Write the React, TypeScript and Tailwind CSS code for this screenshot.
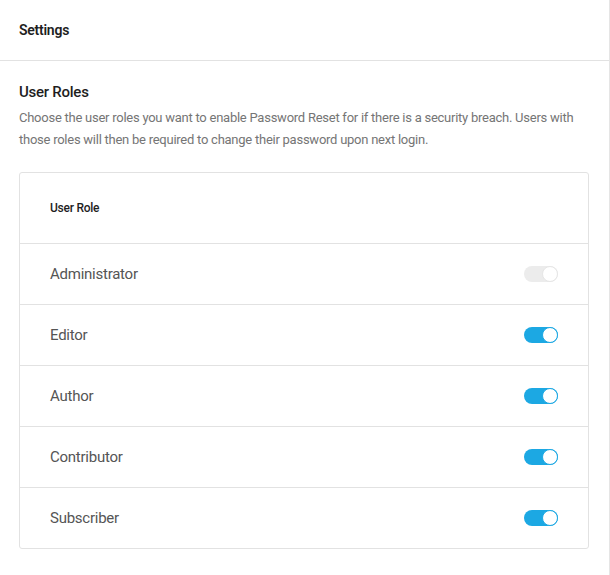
import React from "react";

const roles = [
  { name: "Administrator", on: true, disabled: true },
  { name: "Editor", on: true, disabled: false },
  { name: "Author", on: true, disabled: false },
  { name: "Contributor", on: true, disabled: false },
  { name: "Subscriber", on: true, disabled: false },
];

function Toggle({ disabled }: { disabled: boolean }) {
  return (
    <div
      className={
        "relative w-[34px] h-[16px] rounded-full " +
        (disabled ? "bg-[#ececec]" : "bg-[#1ca8e3]")
      }
    >
      <div
        className={
          "absolute right-0 top-0 w-[16px] h-[16px] rounded-full bg-white border " +
          (disabled ? "border-[#e6e6e6]" : "border-[#1ca8e3]")
        }
      />
    </div>
  );
}

export default function App() {
  return (
    <div
      className="w-[610px] h-[575px] bg-white border-r border-[#e5e5e5] tracking-[-0.25px]"
      style={{ fontFamily: "Roboto, 'Liberation Sans', sans-serif" }}
    >
      <div className="h-[61px] border-b border-[#e2e2e2] flex items-center px-[19px]">
        <span className="text-[14px] font-semibold text-[#1e1e1e]">Settings</span>
      </div>
      <div className="px-[19px] pt-[20px]">
        <h2 className="text-[15px] font-medium text-[#1e1e1e] leading-[22px]">User Roles</h2>
        <p className="mt-[4px] text-[13px] leading-[22px] text-[#757575]">
          Choose the user roles you want to enable Password Reset for if there is a security breach. Users with those roles will then be required to change their password upon next login.
        </p>
        <div className="mt-[21px] w-[570px] border border-[#e2e2e2] rounded-[3px]">
          <div className="h-[71px] flex items-center px-[30px] border-b border-[#e2e2e2]">
            <span className="text-[12px] font-medium text-[#1e1e1e]">User Role</span>
          </div>
          {roles.map((r, i) => (
            <div
              key={r.name}
              className={
                "flex items-center justify-between pl-[30px] pr-[30px] " +
                (i < roles.length - 1 ? "h-[61px] border-b border-[#e2e2e2]" : "h-[60px]")
              }
            >
              <span className="text-[15px] text-[#555555]">{r.name}</span>
              <Toggle disabled={r.disabled} />
            </div>
          ))}
        </div>
      </div>
    </div>
  );
}
